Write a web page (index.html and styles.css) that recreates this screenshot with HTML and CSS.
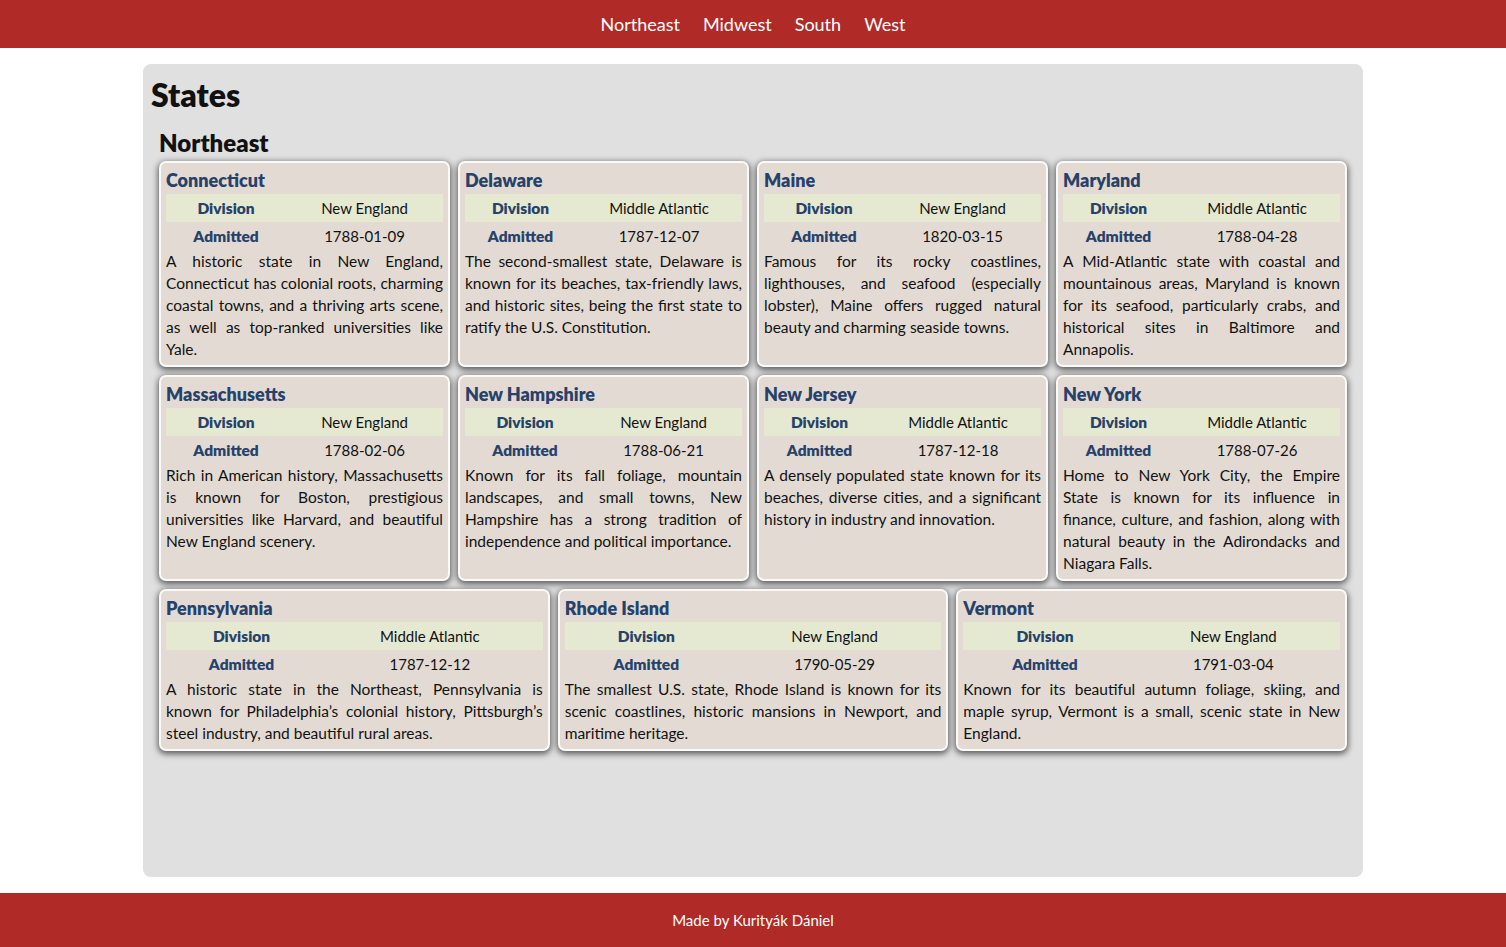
FILE: index.html
```html
<!DOCTYPE html>
<html lang="en">
<head>
<meta charset="utf-8">
<title>States</title>
<link rel="stylesheet" href="styles.css">
</head>
<body>
<header class="topbar">
  <nav class="nav">
    <a href="#" class="nav-link">Northeast</a>
    <a href="#" class="nav-link">Midwest</a>
    <a href="#" class="nav-link">South</a>
    <a href="#" class="nav-link">West</a>
  </nav>
</header>
<main class="panel">
  <h1 class="page-title">States</h1>
  <section class="region">
    <h2 class="region-title">Northeast</h2>
    <div class="cards">
      <article class="card">
        <h3 class="card-title">Connecticut</h3>
        <table class="facts"><tr class="stripe"><th>Division</th><td>New England</td></tr><tr><th>Admitted</th><td>1788-01-09</td></tr></table>
        <p class="desc">A historic state in New England, Connecticut has colonial roots, charming coastal towns, and a thriving arts scene, as well as top-ranked universities like Yale.</p>
      </article>
      <article class="card">
        <h3 class="card-title">Delaware</h3>
        <table class="facts"><tr class="stripe"><th>Division</th><td>Middle Atlantic</td></tr><tr><th>Admitted</th><td>1787-12-07</td></tr></table>
        <p class="desc">The second-smallest state, Delaware is known for its beaches, tax-friendly laws, and historic sites, being the first state to ratify the U.S. Constitution.</p>
      </article>
      <article class="card">
        <h3 class="card-title">Maine</h3>
        <table class="facts"><tr class="stripe"><th>Division</th><td>New England</td></tr><tr><th>Admitted</th><td>1820-03-15</td></tr></table>
        <p class="desc">Famous for its rocky coastlines, lighthouses, and seafood (especially lobster), Maine offers rugged natural beauty and charming seaside towns.</p>
      </article>
      <article class="card">
        <h3 class="card-title">Maryland</h3>
        <table class="facts"><tr class="stripe"><th>Division</th><td>Middle Atlantic</td></tr><tr><th>Admitted</th><td>1788-04-28</td></tr></table>
        <p class="desc">A Mid-Atlantic state with coastal and mountainous areas, Maryland is known for its seafood, particularly crabs, and historical sites in Baltimore and Annapolis.</p>
      </article>
      <article class="card">
        <h3 class="card-title">Massachusetts</h3>
        <table class="facts"><tr class="stripe"><th>Division</th><td>New England</td></tr><tr><th>Admitted</th><td>1788-02-06</td></tr></table>
        <p class="desc">Rich in American history, Massachusetts is known for Boston, prestigious universities like Harvard, and beautiful New England scenery.</p>
      </article>
      <article class="card">
        <h3 class="card-title">New Hampshire</h3>
        <table class="facts"><tr class="stripe"><th>Division</th><td>New England</td></tr><tr><th>Admitted</th><td>1788-06-21</td></tr></table>
        <p class="desc">Known for its fall foliage, mountain landscapes, and small towns, New Hampshire has a strong tradition of independence and political importance.</p>
      </article>
      <article class="card">
        <h3 class="card-title">New Jersey</h3>
        <table class="facts"><tr class="stripe"><th>Division</th><td>Middle Atlantic</td></tr><tr><th>Admitted</th><td>1787-12-18</td></tr></table>
        <p class="desc">A densely populated state known for its beaches, diverse cities, and a significant history in industry and innovation.</p>
      </article>
      <article class="card">
        <h3 class="card-title">New York</h3>
        <table class="facts"><tr class="stripe"><th>Division</th><td>Middle Atlantic</td></tr><tr><th>Admitted</th><td>1788-07-26</td></tr></table>
        <p class="desc">Home to New York City, the Empire State is known for its influence in finance, culture, and fashion, along with natural beauty in the Adirondacks and Niagara Falls.</p>
      </article>
      <article class="card">
        <h3 class="card-title">Pennsylvania</h3>
        <table class="facts"><tr class="stripe"><th>Division</th><td>Middle Atlantic</td></tr><tr><th>Admitted</th><td>1787-12-12</td></tr></table>
        <p class="desc">A historic state in the Northeast, Pennsylvania is known for Philadelphia’s colonial history, Pittsburgh’s steel industry, and beautiful rural areas.</p>
      </article>
      <article class="card">
        <h3 class="card-title">Rhode Island</h3>
        <table class="facts"><tr class="stripe"><th>Division</th><td>New England</td></tr><tr><th>Admitted</th><td>1790-05-29</td></tr></table>
        <p class="desc">The smallest U.S. state, Rhode Island is known for its scenic coastlines, historic mansions in Newport, and maritime heritage.</p>
      </article>
      <article class="card">
        <h3 class="card-title">Vermont</h3>
        <table class="facts"><tr class="stripe"><th>Division</th><td>New England</td></tr><tr><th>Admitted</th><td>1791-03-04</td></tr></table>
        <p class="desc">Known for its beautiful autumn foliage, skiing, and maple syrup, Vermont is a small, scenic state in New England.</p>
      </article>
    </div>
  </section>
</main>
<footer class="footer">Made by Kurityák Dániel</footer>
</body>
</html>
```

FILE: styles.css
```css
* { box-sizing: border-box; }

html, body {
  margin: 0;
  padding: 0;
}

body {
  font-family: Lato, "Noto Sans", sans-serif;
  font-size: 16px;
  color: #111;
  background: #fff;
  display: flex;
  flex-direction: column;
  min-height: 100vh;
}

.topbar {
  background: #b02a28;
  height: 48px;
  display: flex;
  align-items: center;
  justify-content: center;
}

.nav {
  display: flex;
  gap: 23px;
  margin-top: -1px;
}

.nav-link {
  color: #fff;
  text-decoration: none;
  font-size: 18px;
}

.panel {
  width: 1220px;
  margin: 16px auto;
  background: #e0e0e0;
  border-radius: 8px;
  padding: 8px;
  flex: 1;
}

.page-title {
  font-size: 32px;
  font-weight: 800;
  margin: 3px 0 0;
  line-height: 40px;
}

.region {
  padding: 0 8px;
}

.region-title {
  font-size: 24px;
  font-weight: 800;
  margin: 13px 0 3px;
  line-height: 30px;
}

.cards {
  display: flex;
  flex-wrap: wrap;
  gap: 8px 8px;
}

.card {
  flex: 1 1 260px;
  background: #e3dbd3;
  border: 2px solid #fafafa;
  border-radius: 7px;
  box-shadow: 0 2px 6px 1px rgba(0, 0, 0, 0.6);
  padding: 6px 5px 5px;
}

.card-title {
  margin: 0 0 3px;
  font-size: 18px;
  line-height: 22px;
  color: #27426a;
  font-weight: 800;
}

.facts {
  width: 100%;
  border-collapse: collapse;
}

.facts th,
.facts td {
  text-align: center;
  padding: 3px 2px;
  line-height: 22px;
}

.facts th {
  color: #27426a;
  font-weight: 800;
  font-size: 15.5px;
}

.facts td {
  font-size: 15px;
}

.stripe {
  background: #e5e9d1;
}

.desc {
  margin: 0;
  font-size: 15.5px;
  text-align: justify;
  line-height: 22px;
}

.footer {
  background: #b02a28;
  color: #fff;
  height: 54px;
  display: flex;
  align-items: center;
  justify-content: center;
  font-size: 15px;
}
```
